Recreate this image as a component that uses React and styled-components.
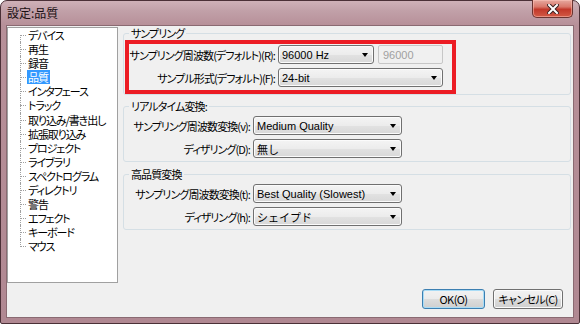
import React from 'react'
import styled, {createGlobalStyle} from 'styled-components'

const JP = `"Noto Sans CJK JP", "Liberation Sans", sans-serif`
const LATIN = `"Liberation Sans", "Noto Sans CJK JP", sans-serif`

const treeItems = [
    'デバイス', '再生', '録音', '品質', 'インタフェース', 'トラック', '取り込み/書き出し',
    '拡張取り込み', 'プロジェクト', 'ライブラリ', 'スペクトログラム', 'ディレクトリ',
    '警告', 'エフェクト', 'キーボード', 'マウス',
]

const App = () => {
    return (
        <>
            <GlobalStyle/>
            <Window>
                <TitleBar>
                    <Title>設定:品質</Title>
                    <CloseButton>
                        <svg width="12" height="10" viewBox="0 0 12 10">
                            <path d="M2 1 L10 9 M10 1 L2 9" stroke="#3a2020" strokeWidth="4" strokeLinecap="square"/>
                            <path d="M2 1 L10 9 M10 1 L2 9" stroke="#ffffff" strokeWidth="2" strokeLinecap="square"/>
                        </svg>
                    </CloseButton>
                </TitleBar>
                <Client>
                    <Body>
                        <Tree>
                            {treeItems.map((name, i) => (
                                <TreeItem key={name} $first={i === 0} $last={i === treeItems.length - 1}>
                                    <TreeLabel $selected={name === '品質'}>{name}</TreeLabel>
                                </TreeItem>
                            ))}
                        </Tree>
                        <Panel>
                            <Group>
                                <Legend>サンプリング</Legend>
                                <Highlight>
                                    <Row>
                                        <Label $width={146}>サンプリング周波数(デフォルト)(R):</Label>
                                        <Select $width={96}>96000 Hz</Select>
                                        <TextField>96000</TextField>
                                    </Row>
                                    <Row>
                                        <Label $width={146}>サンプル形式(デフォルト)(F):</Label>
                                        <Select $width={165}>24-bit</Select>
                                    </Row>
                                </Highlight>
                            </Group>
                            <Group $gap={4}>
                                <Legend>リアルタイム変換:</Legend>
                                <Rows>
                                    <Row>
                                        <Label $width={126}>サンプリング周波数変換(v):</Label>
                                        <Select $width={149}>Medium Quality</Select>
                                    </Row>
                                    <Row>
                                        <Label $width={126}>ディザリング(D):</Label>
                                        <Select $width={149}>無し</Select>
                                    </Row>
                                </Rows>
                            </Group>
                            <Group $gap={5}>
                                <Legend>高品質変換</Legend>
                                <Rows>
                                    <Row>
                                        <Label $width={126}>サンプリング周波数変換(t):</Label>
                                        <Select $width={149}>Best Quality (Slowest)</Select>
                                    </Row>
                                    <Row>
                                        <Label $width={126}>ディザリング(h):</Label>
                                        <Select $width={149}>シェイプド</Select>
                                    </Row>
                                </Rows>
                            </Group>
                        </Panel>
                    </Body>
                    <Footer>
                        <Button $default $width={63}>OK(O)</Button>
                        <Button $width={70}>キャンセル(C)</Button>
                    </Footer>
                </Client>
            </Window>
        </>
    )
}

export default App

const GlobalStyle = createGlobalStyle`
  html, body {
    margin: 0;
    padding: 0;
    background: #ffffff;
  }
  body {
    font-family: ${JP};
    font-size: 11px;
    color: #000;
  }
  * {
    box-sizing: border-box;
  }
`

const Window = styled.div`
  width: 580px;
  height: 324px;
  display: flex;
  flex-direction: column;
  border: 1px solid #4b3037;
  border-radius: 7px 7px 2px 2px;
  background: linear-gradient(180deg, #cfb1b8 0px, #c1a0a8 10px, #b79099 24px, #b08892 100%);
  padding: 0 5px 5px;
`

const TitleBar = styled.div`
  height: 24px;
  display: flex;
  align-items: flex-start;
  justify-content: space-between;
`

const Title = styled.div`
  margin: 5px 0 0 1px;
  font-size: 12px;
  line-height: 14px;
  color: #1a0f12;
  font-feature-settings: "palt";
`

const CloseButton = styled.div`
  width: 41px;
  height: 18px;
  margin: -1px 1px 0 0;
  display: flex;
  align-items: center;
  justify-content: center;
  border: 1px solid #6a3431;
  border-top: none;
  border-radius: 0 0 5px 5px;
  background: linear-gradient(180deg, #e6a99f 0%, #d9776a 40%, #c2382a 55%, #d25a45 100%);
  box-shadow: inset 0 0 0 1px rgba(255, 200, 190, 0.5);
`

const Client = styled.div`
  flex: 1;
  display: flex;
  flex-direction: column;
  border: 1px solid #8a6a72;
  background: #f0f0f0;
`

const Body = styled.div`
  display: flex;
  gap: 5px;
`

const Tree = styled.ul`
  width: 111px;
  height: 256px;
  margin: 1px 0 0 0;
  padding: 0;
  list-style: none;
  border: 1px solid #a0a0a0;
  background: #ffffff;
`

const TreeItem = styled.li`
  position: relative;
  height: 14.1px;
  line-height: 14px;
  padding-left: 19px;
  font-size: 11px;
  letter-spacing: -1.1px;
  font-feature-settings: "palt";

  &::before {
    content: '';
    position: absolute;
    left: 12px;
    top: 7px;
    width: 6px;
    border-top: 1px dotted #a0a0a0;
  }

  &::after {
    content: '';
    position: absolute;
    left: 12px;
    top: ${p => p.$first ? '7px' : '0'};
    bottom: ${p => p.$last ? '7px' : '0'};
    border-left: 1px dotted #a0a0a0;
  }
`

const TreeLabel = styled.span`
  display: inline-block;
  padding: 0 2px 0 1px;
  white-space: nowrap;
  background: ${p => p.$selected ? '#3399ff' : 'transparent'};
  color: ${p => p.$selected ? '#ffffff' : '#000000'};
`

const Panel = styled.div`
  flex: 1;
  display: flex;
  flex-direction: column;
  padding-right: 2px;
`

const Group = styled.fieldset`
  margin: ${p => p.$gap || 0}px 0 0 0;
  padding: 0;
  border: 1px solid #d5dfe5;
  border-radius: 3px;
  min-width: 0;
`

const Legend = styled.legend`
  margin-left: 5px;
  padding: 0 2px;
  font-size: 11px;
  line-height: 14px;
  letter-spacing: -0.9px;
  font-feature-settings: "palt";
`

const Highlight = styled.div`
  width: 331px;
  height: 54px;
  margin-left: 1px;
  border: 4px solid #ec1c24;
  padding-top: 1px;
  display: flex;
  flex-direction: column;
  gap: 4px;
`

const Rows = styled.div`
  display: flex;
  flex-direction: column;
  gap: 4px;
  padding: 3px 0 3px 0;
`

const Row = styled.div`
  display: flex;
  align-items: center;
`

const Label = styled.div`
  width: ${p => p.$width}px;
  flex-shrink: 0;
  margin-right: 2px;
  display: flex;
  justify-content: flex-end;
  white-space: nowrap;
  font-size: 11px;
  line-height: 14px;
  letter-spacing: -0.9px;
  font-feature-settings: "palt";
`

const Select = styled.div`
  position: relative;
  width: ${p => p.$width}px;
  flex-shrink: 0;
  height: 19px;
  margin-left: 1px;
  padding-left: 3px;
  display: flex;
  align-items: center;
  border: 1px solid #707070;
  border-radius: 3px;
  background: linear-gradient(180deg, #f4f4f4 0%, #ececec 50%, #e2e2e2 51%, #d8d8d8 100%);
  box-shadow: inset 0 0 0 1px #fbfbfb;
  font-family: ${LATIN};
  font-size: 11px;
  white-space: nowrap;

  &::after {
    content: '';
    position: absolute;
    right: 5px;
    top: 7px;
    border-left: 3.5px solid transparent;
    border-right: 3.5px solid transparent;
    border-top: 4px solid #000;
  }
`

const TextField = styled.div`
  width: 65px;
  height: 19px;
  margin-left: 4px;
  padding-left: 4px;
  display: flex;
  align-items: center;
  border: 1px solid #c7c7c7;
  border-radius: 2px;
  background: #f0f0f0;
  color: #a0a0a0;
  font-family: ${LATIN};
  font-size: 11px;
`

const Footer = styled.div`
  margin-top: auto;
  display: flex;
  justify-content: flex-end;
  gap: 8px;
  padding: 0 10px 8px 0;
`

const Button = styled.div`
  width: ${p => p.$width}px;
  height: 20px;
  display: flex;
  align-items: center;
  justify-content: center;
  border: 1px solid ${p => p.$default ? '#3c7fb1' : '#707070'};
  border-radius: 3px;
  background: linear-gradient(180deg, #f2f2f2 0%, #ebebeb 50%, #dddddd 51%, #cfcfcf 100%);
  box-shadow: inset 0 0 0 1px ${p => p.$default ? '#a9dcf6' : '#fbfbfb'};
  font-size: 11px;
  letter-spacing: -0.6px;
  font-feature-settings: "palt";
  white-space: nowrap;
`
